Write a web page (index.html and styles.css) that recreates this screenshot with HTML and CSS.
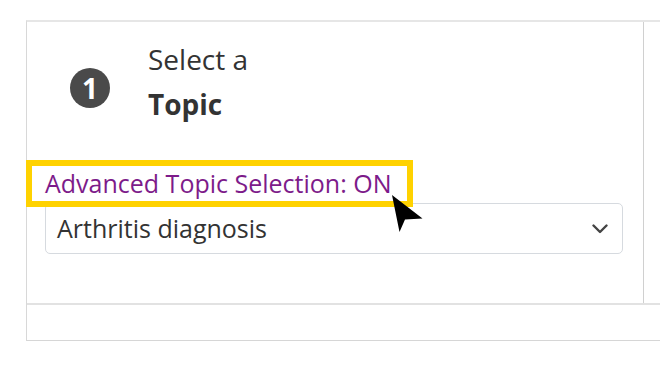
FILE: index.html
```html
<!DOCTYPE html>
<html lang="en">
<head>
<meta charset="utf-8">
<title>Select a Topic</title>
<link rel="stylesheet" href="styles.css">
</head>
<body>
<div class="frame">
  <div class="card-row">
    <section class="card">
      <div class="step-head">
        <span class="step-num">1</span>
        <h2 class="step-title"><span class="light">Select a</span><span class="bold">Topic</span></h2>
      </div>
      <a class="adv-label" href="#">Advanced Topic Selection: ON</a>
      <div class="select">
        <span class="select-value">Arthritis diagnosis</span>
        <svg class="chevron" width="16" height="10" viewBox="0 0 16 10"><path d="M1.5 1.5 L8 8 L14.5 1.5" fill="none" stroke="#444" stroke-width="2.4" stroke-linecap="round" stroke-linejoin="round"/></svg>
      </div>
    </section>
  </div>
  <div class="footer"></div>
</div>
<svg class="cursor" width="32" height="40" viewBox="0 0 32 40"><polygon points="0,0 7.5,37 13,24.5 30.5,23.5" fill="#000"/></svg>
</body>
</html>
```
FILE: styles.css
```css
html, body {
  margin: 0;
  padding: 0;
  background: #fff;
  overflow: hidden;
  font-family: "Open Sans", "Noto Sans", sans-serif;
}
.frame {
  margin: 20px 0 0 26px;
  border-top: 2px solid #e6e6e6;
  border-left: 1px solid #d8d8d8;
  border-bottom: 1px solid #d6d6d6;
}
.card-row {
  border-bottom: 2px solid #e2e2e2;
}
.card {
  width: 617px;
  border-right: 1px solid #d0d0d0;
  padding: 15px 0 49px 18px;
  box-sizing: border-box;
}
.step-head {
  display: flex;
  align-items: flex-start;
}
.step-num {
  width: 40px;
  height: 40px;
  margin: 31px 38px 0 25px;
  border-radius: 50%;
  background: #4a4a4a;
  color: #fff;
  font-weight: 700;
  font-size: 28px;
  line-height: 40px;
  text-align: center;
  flex: none;
}
.step-title {
  margin: 0;
  font-size: 28px;
  line-height: 45px;
  color: #333;
}
.step-title span { display: block; }
.light { font-weight: 400; }
.bold { font-weight: 700; }
.adv-label {
  display: block;
  width: 375px;
  box-sizing: border-box;
  margin: 39px 0 0 -13px;
  padding-left: 13px;
  height: 35px;
  line-height: 35px;
  font-size: 25px;
  color: #7d1b8a;
  text-decoration: none;
  outline: 6px solid #ffd200;
}
.select {
  margin-top: 2px;
  width: 578px;
  height: 51px;
  box-sizing: border-box;
  border: 1px solid #d6dadf;
  border-radius: 5px;
  display: flex;
  align-items: center;
  justify-content: space-between;
  padding: 0 14px 0 11px;
}
.select-value {
  font-size: 25px;
  color: #333;
  line-height: 49px;
}
.chevron { display: block; }
.footer {
  height: 35px;
}
.cursor {
  position: absolute;
  left: 392px;
  top: 195px;
}
```
